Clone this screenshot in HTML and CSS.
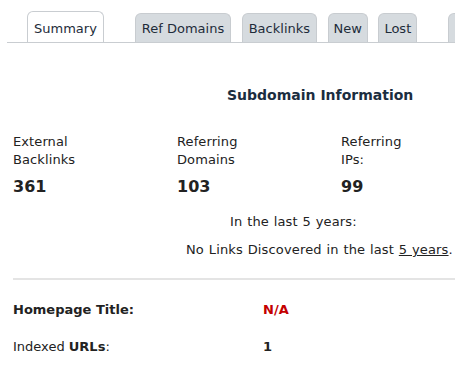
FILE: index.html
```html
<!DOCTYPE html>
<html>
<head>
<meta charset="utf-8">
<link rel="stylesheet" href="styles.css">
</head>
<body>
<div class="tabbar">
  <div class="tab active">Summary</div>
  <div class="tab gap-wide">Ref Domains</div>
  <div class="tab">Backlinks</div>
  <div class="tab tight">New</div>
  <div class="tab tight">Lost</div>
  <div class="tab gap-wide">Anchors</div>
</div>
<div class="content">
  <h2 class="heading">Subdomain Information</h2>
  <div class="stats">
    <div class="stat">
      <div class="label">External<br>Backlinks</div>
      <div class="num">361</div>
    </div>
    <div class="stat">
      <div class="label">Referring<br>Domains</div>
      <div class="num">103</div>
    </div>
    <div class="stat">
      <div class="label">Referring<br>IPs:</div>
      <div class="num">99</div>
    </div>
  </div>
  <div class="period">In the last 5 years:</div>
  <div class="nolinks">No Links Discovered in the last <a href="#">5 years</a>.</div>
  <hr class="sep">
  <div class="row first"><div class="key bold">Homepage Title:</div><div class="val red">N/A</div></div>
  <div class="row"><div class="key">Indexed <b>URLs</b>:</div><div class="val">1</div></div>
</div>
</body>
</html>
```
FILE: styles.css
```css
html, body {
  margin: 0;
  padding: 0;
  background: #fff;
  overflow: hidden;
}
body {
  font-family: "DejaVu Sans", Verdana, sans-serif;
  font-size: 13px;
  line-height: 18px;
  color: #222;
  width: 455px;
  height: 376px;
}
.tabbar {
  display: flex;
  align-items: flex-end;
  margin-left: 7px;
  padding-left: 20px;
  padding-top: 11px;
  height: 31px;
  border-bottom: 1px solid #c9cdd1;
  white-space: nowrap;
  overflow: hidden;
}
.tab {
  box-sizing: border-box;
  height: 30px;
  padding: 6px 6px 0;
  margin-left: 10.5px;
  margin-bottom: -1px;
  background: #d6dbdf;
  border: 1px solid #c8ccd0;
  border-bottom: none;
  border-radius: 6px 6px 0 0;
  color: #1e2c3a;
  flex: none;
}
.tab.tight {
  padding-left: 5px;
  padding-right: 5px;
}
.tab.active {
  margin-left: 0;
  height: 32px;
  padding: 8px 6px 0;
  background: #fff;
  border-color: #c9cdd1;
  border-bottom: 1px solid #fff;
  color: #1e2c3a;
}
.tab.gap-wide {
  margin-left: 31px;
}
.content {
  padding: 0 0 0 13px;
}
.heading {
  margin: 42px 0 0 0;
  padding-left: 214px;
  font-size: 14px;
  line-height: 20px;
  font-weight: bold;
  color: #1b2d40;
}
.stats {
  display: flex;
  margin-top: 28px;
}
.stat {
  width: 164px;
  flex: none;
}
.label {
  letter-spacing: 0.1px;
}
.num {
  margin-top: 8px;
  font-size: 16px;
  line-height: 20px;
  font-weight: bold;
  color: #222;
}
.period {
  margin-top: 16px;
  padding-left: 217px;
  letter-spacing: 0.15px;
  word-spacing: 0.5px;
}
.nolinks {
  margin-top: 10px;
  padding-left: 173px;
  white-space: nowrap;
  letter-spacing: 0.15px;
  word-spacing: 0.5px;
}
.nolinks a {
  color: #222;
  text-decoration: underline;
}
.sep {
  margin: 19px 0 0 0;
  border: none;
  height: 2px;
  background: #e4e4e4;
}
.row {
  display: flex;
  margin-top: 19px;
}
.row.first {
  margin-top: 21px;
}
.key {
  width: 250px;
  flex: none;
}
.bold {
  font-weight: bold;
}
.val {
  font-weight: bold;
}
.red {
  color: #c40000;
}
```
